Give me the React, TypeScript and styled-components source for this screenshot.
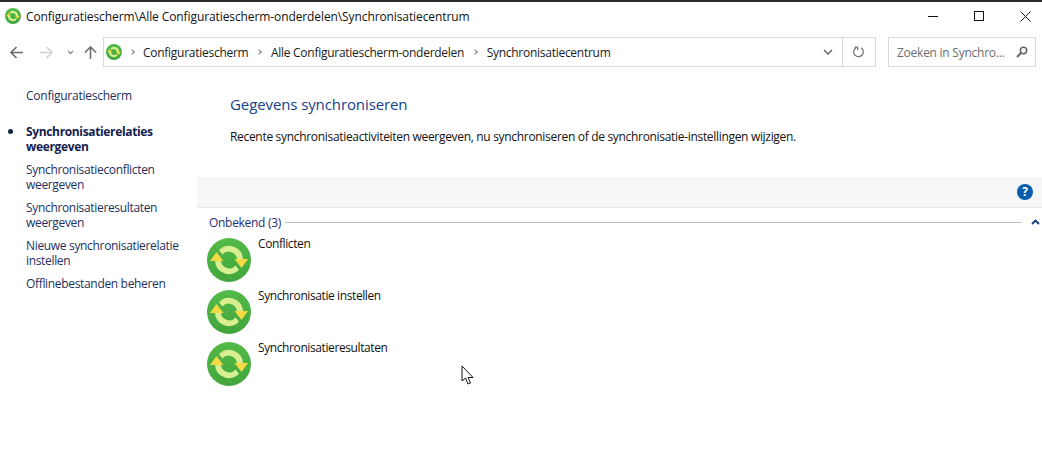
import React from "react";
import styled, { createGlobalStyle } from "styled-components";

const GlobalStyle = createGlobalStyle`
  html, body { margin: 0; padding: 0; background: #fff; }
  body { font-family: "Open Sans", "Noto Sans", sans-serif; font-size: 12px; overflow: hidden; }
`;

const SyncIcon = ({ size }: { size: number }) => (
  <svg width={size} height={size} viewBox="0 0 44 44">
    <defs>
      <linearGradient id="syncBg" x1="0" y1="0" x2="0" y2="1">
        <stop offset="0" stopColor="#53bb4a" />
        <stop offset="1" stopColor="#41a53b" />
      </linearGradient>
    </defs>
    <circle cx="22" cy="22" r="22" fill="url(#syncBg)" />
    <path d="M36 22A14 14 0 0 0 12 12.2L15.4 16.6A8.3 8.3 0 0 1 30 22Z" fill="#d8ee90" />
    <path d="M27.5 21H41L34.5 30Z" fill="#f4da42" />
    <g transform="rotate(180 22 22)">
      <path d="M36 22A14 14 0 0 0 12 12.2L15.4 16.6A8.3 8.3 0 0 1 30 22Z" fill="#d8ee90" />
      <path d="M27.5 21H41L34.5 30Z" fill="#f4da42" />
    </g>
  </svg>
);

const Page = () => {
  const links = [
    { label: ["Synchronisatierelaties", "weergeven"], active: true },
    { label: ["Synchronisatieconflicten", "weergeven"] },
    { label: ["Synchronisatieresultaten", "weergeven"] },
    { label: ["Nieuwe synchronisatierelatie", "instellen"] },
    { label: ["Offlinebestanden beheren"] },
  ];
  const items = ["Conflicten", "Synchronisatie instellen", "Synchronisatieresultaten"];

  return (
    <Window>
      <TitleBar>
        <TitleLeft>
          <SyncIcon size={16} />
          <TitleText>Configuratiescherm\Alle Configuratiescherm-onderdelen\Synchronisatiecentrum</TitleText>
        </TitleLeft>
        <WindowButtons>
          <WindowButton>
            <svg width="10" height="10" viewBox="0 0 10 10"><path d="M0 5.5H10" stroke="#111" fill="none" /></svg>
          </WindowButton>
          <WindowButton>
            <svg width="10" height="10" viewBox="0 0 10 10"><rect x="0.5" y="0.5" width="9" height="9" stroke="#111" fill="none" /></svg>
          </WindowButton>
          <WindowButton>
            <svg width="11" height="11" viewBox="0 0 11 11"><path d="M0.5 0.5L10.5 10.5M10.5 0.5L0.5 10.5" stroke="#111" fill="none" /></svg>
          </WindowButton>
        </WindowButtons>
      </TitleBar>

      <Toolbar>
        <NavButtons>
          <NavArrow $after={17}>
            <svg width="13" height="13" viewBox="0 0 13 13"><path d="M1 6.5H13M6.5 1L1 6.5L6.5 12" stroke="#6d6d6d" strokeWidth="1.6" fill="none" /></svg>
          </NavArrow>
          <NavArrow $after={14}>
            <svg width="13" height="13" viewBox="0 0 13 13"><path d="M0 6.5H12M6.5 1L12 6.5L6.5 12" stroke="#d2d2d2" strokeWidth="1.6" fill="none" /></svg>
          </NavArrow>
          <NavArrow $after={10}>
            <svg width="7" height="13" viewBox="0 0 7 13"><path d="M1 5L3.5 7.5L6 5" stroke="#8a8a8a" strokeWidth="1.3" fill="none" /></svg>
          </NavArrow>
          <NavArrow>
            <svg width="13" height="13" viewBox="0 0 13 13"><path d="M6.5 13V1M1 6.5L6.5 1L12 6.5" stroke="#6d6d6d" strokeWidth="1.6" fill="none" /></svg>
          </NavArrow>
        </NavButtons>
        <AddressBar>
          <Crumbs>
            <SyncIcon size={16} />
            <Caret />
            <Crumb>Configuratiescherm</Crumb>
            <Caret />
            <Crumb>Alle Configuratiescherm-onderdelen</Crumb>
            <Caret />
            <Crumb>Synchronisatiecentrum</Crumb>
          </Crumbs>
          <AddressAction $wide>
            <svg width="10" height="6" viewBox="0 0 10 6"><path d="M1 1L5 5L9 1" stroke="#666" strokeWidth="1.5" fill="none" /></svg>
          </AddressAction>
          <AddressAction $divided>
            <svg width="12" height="12" viewBox="0 0 12 12"><path d="M3.2 1.6A4.8 4.8 0 1 0 8 1.7" stroke="#777" strokeWidth="1.3" fill="none" /><path d="M1.5 1.2H4.6V4.2" stroke="#777" strokeWidth="1.2" fill="none" /></svg>
          </AddressAction>
        </AddressBar>
        <SearchBox>
          <SearchText>Zoeken in Synchro...</SearchText>
          <svg width="12" height="12" viewBox="0 0 12 12"><circle cx="7.5" cy="4.5" r="3.2" stroke="#666" strokeWidth="1.5" fill="none" /><path d="M5 7L1 11" stroke="#666" strokeWidth="2" /></svg>
        </SearchBox>
      </Toolbar>

      <Body>
        <Sidebar>
          <SideHome>Configuratiescherm</SideHome>
          <SideList>
            {links.map((link) => (
              <SideLink key={link.label[0]} $active={link.active}>
                {link.label.map((line) => (
                  <div key={line}>{line}</div>
                ))}
              </SideLink>
            ))}
          </SideList>
        </Sidebar>
        <Main>
          <Intro>
            <Heading>Gegevens synchroniseren</Heading>
            <Description>
              Recente synchronisatieactiviteiten weergeven, nu synchroniseren of de synchronisatie-instellingen wijzigen.
            </Description>
          </Intro>
          <CommandStrip>
            <HelpBadge>?</HelpBadge>
          </CommandStrip>
          <GroupHeader>
            <GroupTitle>Onbekend (3)</GroupTitle>
            <GroupRule />
            <svg width="9" height="6" viewBox="0 0 9 6"><path d="M1 5L4.5 1.5L8 5" stroke="#123f7c" strokeWidth="1.8" fill="none" /></svg>
          </GroupHeader>
          <ItemList>
            {items.map((item) => (
              <Item key={item}>
                <SyncIcon size={44} />
                <ItemLabel>{item}</ItemLabel>
              </Item>
            ))}
          </ItemList>
        </Main>
      </Body>

      <Cursor width="14" height="21" viewBox="0 0 14 21">
        <path d="M1 1V16L4.5 13L7 19L9.5 18L7 12.5H12Z" fill="#fff" stroke="#111" strokeWidth="1" />
      </Cursor>
    </Window>
  );
};

export default function App() {
  return (
    <>
      <GlobalStyle />
      <Page />
    </>
  );
}

const Window = styled.div`
  position: relative;
  width: 1042px;
  height: 454px;
  overflow: hidden;
  background: #fff;
  border-top: 2px solid #2b2b2b;
  box-sizing: border-box;
  color: #000;
  letter-spacing: -0.25px;
`;

const TitleBar = styled.div`
  height: 28px;
  display: flex;
  align-items: center;
  justify-content: space-between;
`;

const TitleLeft = styled.div`
  display: flex;
  align-items: center;
  gap: 5px;
  padding-left: 5px;
`;

const TitleText = styled.span`
  color: #111;
  letter-spacing: -0.1px;
`;

const WindowButtons = styled.div`
  display: flex;
  margin-right: -6px;
`;

const WindowButton = styled.div`
  width: 46px;
  height: 28px;
  display: flex;
  align-items: center;
  justify-content: center;
`;

const Toolbar = styled.div`
  height: 30px;
  margin-top: 7px;
  display: flex;
  align-items: center;
`;

const NavButtons = styled.div`
  width: 103px;
  flex: none;
  display: flex;
  align-items: center;
  padding-left: 10px;
  box-sizing: border-box;
`;

const NavArrow = styled.div<{ $after?: number }>`
  height: 13px;
  display: flex;
  margin-right: ${(p) => p.$after ?? 0}px;
`;

const AddressBar = styled.div`
  width: 773px;
  height: 30px;
  box-sizing: border-box;
  border: 1px solid #d9d9d9;
  display: flex;
  align-items: center;
`;

const Crumbs = styled.div`
  flex: 1;
  display: flex;
  align-items: center;
  padding-left: 2px;
`;

const Crumb = styled.span`
  color: #1a1a1a;
  letter-spacing: -0.27px;
  margin-right: 1.5px;
`;

const Caret = styled.span`
  width: 4px;
  height: 4px;
  box-sizing: border-box;
  border-top: 1.5px solid #7a7a7a;
  border-right: 1.5px solid #7a7a7a;
  transform: rotate(45deg);
  margin: 0 9.5px 0 7.5px;
`;

const AddressAction = styled.div<{ $wide?: boolean; $divided?: boolean }>`
  width: ${(p) => (p.$wide ? "29px" : "33px")};
  height: 100%;
  display: flex;
  align-items: center;
  justify-content: center;
  border-left: ${(p) => (p.$divided ? "1px solid #d9d9d9" : "none")};
  box-sizing: border-box;
`;

const SearchBox = styled.div`
  width: 148px;
  height: 30px;
  margin-left: 12px;
  box-sizing: border-box;
  border: 1px solid #d9d9d9;
  display: flex;
  align-items: center;
  justify-content: space-between;
  padding: 0 7px 0 8px;
`;

const SearchText = styled.span`
  color: #6d6d6d;
`;

const Body = styled.div`
  display: flex;
`;

const Sidebar = styled.nav`
  width: 197px;
  flex: none;
  padding: 21px 0 0 26px;
  box-sizing: border-box;
  color: #1c2f5e;
`;

const SideHome = styled.div`
  line-height: 16px;
  margin-bottom: 20px;
`;

const SideList = styled.div`
  display: flex;
  flex-direction: column;
  gap: 8px;
`;

const SideLink = styled.div<{ $active?: boolean }>`
  position: relative;
  line-height: 15px;
  font-weight: ${(p) => (p.$active ? 700 : 400)};
  color: ${(p) => (p.$active ? "#14214e" : "#1c2f5e")};
  letter-spacing: ${(p) => (p.$active ? "-0.35px" : "-0.33px")};

  ${(p) =>
    p.$active &&
    `&::before {
      content: "";
      position: absolute;
      left: -18px;
      top: 5px;
      width: 5px;
      height: 5px;
      border-radius: 50%;
      background: #14214e;
    }`}
`;

const Main = styled.main`
  flex: 1;
  min-width: 0;
`;

const Intro = styled.div`
  height: 110px;
  padding: 27px 0 0 33px;
  box-sizing: border-box;
`;

const Heading = styled.h1`
  margin: 0;
  font-size: 15px;
  font-weight: 400;
  line-height: 20px;
  letter-spacing: -0.1px;
  color: #14428b;
`;

const Description = styled.p`
  margin: 15px 0 0;
  line-height: 16px;
  color: #111;
  letter-spacing: -0.315px;
`;

const CommandStrip = styled.div`
  height: 30px;
  background: #f5f6f7;
  border-bottom: 1px solid #e4e6e9;
  display: flex;
  align-items: center;
  justify-content: flex-end;
  padding-right: 9px;
`;

const HelpBadge = styled.div`
  width: 16px;
  height: 16px;
  border-radius: 50%;
  background: #0a5cad;
  color: #fff;
  font-size: 12px;
  font-weight: 700;
  line-height: 16px;
  text-align: center;
  letter-spacing: 0;
`;

const GroupHeader = styled.div`
  height: 28px;
  margin-bottom: 2px;
  padding: 0 2px 0 12px;
  display: flex;
  align-items: center;
  gap: 4px;
`;

const GroupTitle = styled.span`
  color: #1f2f7a;
  letter-spacing: -0.3px;
`;

const GroupRule = styled.div`
  flex: 1;
  height: 1px;
  background: #b6bed8;
  margin-right: 5px;
`;

const ItemList = styled.div`
  display: flex;
  flex-direction: column;
  gap: 8px;
  padding-left: 10px;
`;

const Item = styled.div`
  height: 44px;
  display: flex;
  align-items: flex-start;
  gap: 7px;
`;

const ItemLabel = styled.span`
  line-height: 12px;
  color: #111;
  letter-spacing: -0.4px;
`;

const Cursor = styled.svg`
  position: absolute;
  left: 461px;
  top: 363px;
`;
